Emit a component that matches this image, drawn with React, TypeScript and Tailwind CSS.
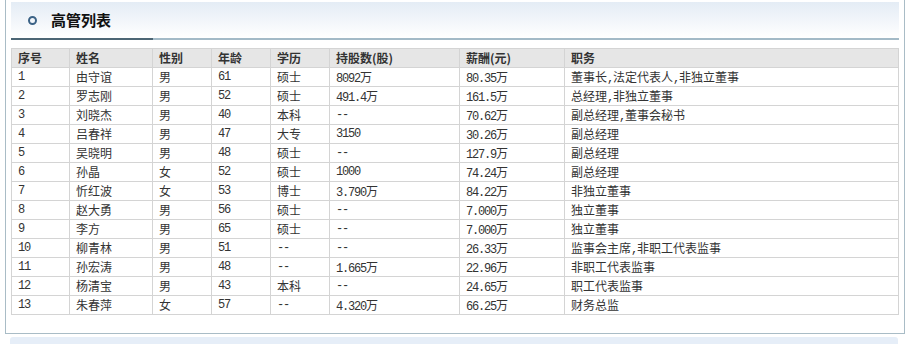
const rows: string[][] = [
  ['1', '由守谊', '男', '61', '硕士', '8092万', '80.35万', '董事长,法定代表人,非独立董事'],
  ['2', '罗志刚', '男', '52', '硕士', '491.4万', '161.5万', '总经理,非独立董事'],
  ['3', '刘晓杰', '男', '40', '本科', '--', '70.62万', '副总经理,董事会秘书'],
  ['4', '吕春祥', '男', '47', '大专', '3150', '30.26万', '副总经理'],
  ['5', '吴晓明', '男', '48', '硕士', '--', '127.9万', '副总经理'],
  ['6', '孙晶', '女', '52', '硕士', '1000', '74.24万', '副总经理'],
  ['7', '忻红波', '女', '53', '博士', '3.790万', '84.22万', '非独立董事'],
  ['8', '赵大勇', '男', '56', '硕士', '--', '7.000万', '独立董事'],
  ['9', '李方', '男', '65', '硕士', '--', '7.000万', '独立董事'],
  ['10', '柳青林', '男', '51', '--', '--', '26.33万', '监事会主席,非职工代表监事'],
  ['11', '孙宏涛', '男', '48', '--', '1.665万', '22.96万', '非职工代表监事'],
  ['12', '杨清宝', '男', '43', '本科', '--', '24.65万', '职工代表监事'],
  ['13', '朱春萍', '女', '57', '--', '4.320万', '66.25万', '财务总监'],
]

const headers = ['序号', '姓名', '性别', '年龄', '学历', '持股数(股)', '薪酬(元)', '职务']
const widths = ['w-[58px]', 'w-[83px]', 'w-[59px]', 'w-[59px]', 'w-[59px]', 'w-[130px]', 'w-[105px]', '']

// half-width runs (digits, dots, dashes, commas) set in a fixed 6px advance like the original
function Txt({ s }: { s: string }) {
  const parts = s.match(/[\x20-\x7e]+|[^\x20-\x7e]+/g) || []
  return (
    <div className="flex items-baseline h-[18px] leading-[18px] whitespace-pre overflow-hidden">
      {parts.map((p, i) =>
        /^[\x20-\x7e]+$/.test(p) ? (
          <span
            key={i}
            className="tracking-[-1.2px]"
            style={{ fontFamily: '"Liberation Mono", monospace' }}
          >
            {p}
          </span>
        ) : (
          <span key={i}>{p}</span>
        )
      )}
    </div>
  )
}

export default function App() {
  return (
    <div
      className="w-[917px] h-[344px] bg-white overflow-hidden text-[12px] text-[#333]"
      style={{ fontFamily: '"Noto Sans CJK SC", sans-serif' }}
    >
      <div className="ml-[5px] w-[900px] h-[334px] border-l border-r border-b border-[#a9bcc6] pt-[2px] px-[4px]">
        {/* title bar */}
        <div className="h-[36px] bg-gradient-to-b from-[#e4ecf5] to-white flex items-center pl-[17px] mx-[1px]">
          <span className="w-[9px] h-[9px] rounded-full border-2 border-[#3b6286] mr-[14px]" />
          <span className="text-[15px] font-bold text-[#111]">高管列表</span>
        </div>
        <div className="flex h-[2px] mx-[1px]">
          <div className="w-[142px] bg-[#4c6675]" />
          <div className="flex-1 bg-[#a3bac7]" />
        </div>
        {/* table */}
        <table className="mt-[8px] w-[888px] ml-[1px] border-collapse table-fixed">
          <thead>
            <tr className="bg-[#e6e6e6]">
              {headers.map((h, i) => (
                <th
                  key={h}
                  className={`${widths[i]} border border-[#d4d4d4] text-left font-bold pl-[6px] py-0 h-[19px] leading-[18px]`}
                >
                  {h}
                </th>
              ))}
            </tr>
          </thead>
          <tbody>
            {rows.map((r) => (
              <tr key={r[0]}>
                {r.map((c, i) => (
                  <td key={i} className="border border-[#d4d4d4] pl-[6px] py-0 h-[19px]">
                    <Txt s={c} />
                  </td>
                ))}
              </tr>
            ))}
          </tbody>
        </table>
      </div>
      {/* next panel peek */}
      <div className="ml-[10px] mt-[3px] w-[888px] h-[10px] bg-[#e6eef8] rounded-t-[3px]" />
    </div>
  )
}
